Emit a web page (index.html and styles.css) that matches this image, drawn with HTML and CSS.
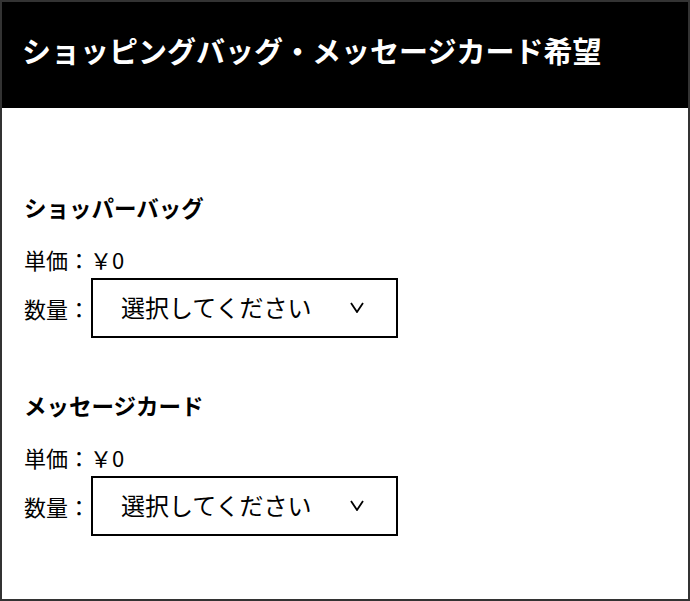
FILE: index.html
```html
<!DOCTYPE html>
<html lang="ja">
<head>
  <meta charset="UTF-8" />
  <meta name="viewport" content="width=device-width, initial-scale=1" />
  <title>ショッピングバッグ・メッセージカード希望</title>
  <link rel="stylesheet" href="styles.css">
</head>
<body>
<div class="frame">
  <div class="header">
    <h1>ショッピングバッグ・メッセージカード希望</h1>
  </div>

  <div class="content">
    <div class="option">
      <h2>ショッパーバッグ</h2>
      <p class="price">単価：￥0</p>
      <div class="qty">
        <label for="bagQty">数量：</label>
        <div class="select-wrap">
          <select id="bagQty" name="bagQty">
            <option value="">選択してください</option>
            <option value="1">1</option>
            <option value="2">2</option>
            <option value="3">3</option>
          </select>
          <svg class="chevron" width="14" height="11" viewBox="0 0 14 11"><path d="M1 1 L7 10 L13 1" fill="none" stroke="#000" stroke-width="1.8"/></svg>
        </div>
      </div>
    </div>

    <div class="option">
      <h2>メッセージカード</h2>
      <p class="price">単価：￥0</p>
      <div class="qty">
        <label for="cardQty">数量：</label>
        <div class="select-wrap">
          <select id="cardQty" name="cardQty">
            <option value="">選択してください</option>
            <option value="1">1</option>
            <option value="2">2</option>
            <option value="3">3</option>
          </select>
          <svg class="chevron" width="14" height="11" viewBox="0 0 14 11"><path d="M1 1 L7 10 L13 1" fill="none" stroke="#000" stroke-width="1.8"/></svg>
        </div>
      </div>
    </div>
  </div>
</div>
</body>
</html>
```

FILE: styles.css
```css
:root {
  --frame-grey: #333333;
  --ink: #000000;
}

body {
  margin: 0;
  font-family: "Noto Sans CJK JP", "Noto Sans", sans-serif;
  color: var(--ink);
  background: #fff;
}

.frame {
  width: 690px;
  height: 601px;
  border: 2px solid var(--frame-grey);
  box-sizing: border-box;
  overflow: hidden;
}

.header {
  background-color: #000;
  height: 106px;
  padding: 27px 20px 0;
  box-sizing: border-box;
}

.header h1 {
  margin: 0;
  color: #fff;
  font-size: 29px;
  line-height: 42px;
  font-weight: bold;
}

.content {
  padding: 83px 22px 0;
}

.option + .option {
  margin-top: 51px;
}

.option h2 {
  margin: 0;
  font-size: 22.5px;
  line-height: 32px;
  font-weight: bold;
}

.price {
  margin: 21px 0 0;
  font-size: 22px;
  line-height: 30px;
}

.qty {
  display: flex;
  align-items: center;
  margin-top: 4px;
}

.qty label {
  font-size: 22px;
  line-height: 30px;
  width: 67px;
}

.select-wrap {
  position: relative;
}

.select-wrap select {
  appearance: none;
  -webkit-appearance: none;
  width: 307px;
  height: 60px;
  border: 2px solid #000;
  border-radius: 0;
  background: #fff;
  padding: 0 0 4px 28px;
  font-family: inherit;
  font-size: 24px;
  color: var(--ink);
  box-sizing: border-box;
}

.chevron {
  position: absolute;
  right: 34px;
  top: 24px;
  pointer-events: none;
}
```
